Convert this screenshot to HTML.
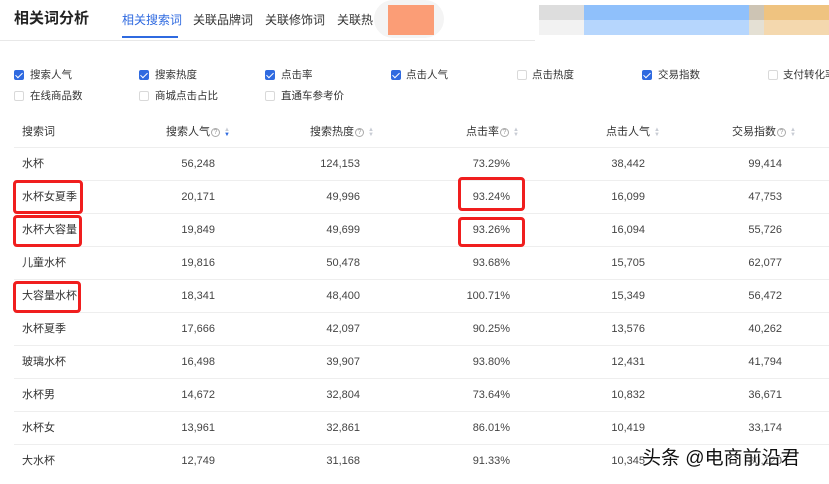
<!DOCTYPE html><html><head><meta charset="utf-8"><style>
*{margin:0;padding:0;box-sizing:border-box}
body{width:829px;height:484px;overflow:hidden;background:#fff;font-family:"Liberation Sans","Noto Sans CJK SC",sans-serif;color:#333;position:relative;font-size:11px;line-height:14px}
.a{position:absolute;white-space:nowrap}
.cb{position:absolute;width:10px;height:10px;border:1px solid #d9d9d9;border-radius:2px;background:#fff}
.cb.on{background:#2f6ae0;border-color:#2f6ae0}
.cb.on:after{content:"";position:absolute;left:2px;top:0px;width:3px;height:6px;border:solid #fff;border-width:0 1.5px 1.5px 0;transform:rotate(45deg)}
.lbl{position:absolute;font-size:10.5px;color:#333;white-space:nowrap}
.hl{position:absolute;left:14px;right:0;height:1px;background:#eee}
.r{position:absolute;text-align:right;color:#444;white-space:nowrap}
.box{position:absolute;border:3px solid #f01e1e;border-radius:4px}
.q{display:inline-block;width:9px;height:9px;border:1px solid #aaa;border-radius:50%;font-size:7px;line-height:7px;text-align:center;color:#999;vertical-align:1px;margin-left:1px}
.s{display:inline-block;width:6px;margin-left:4px;vertical-align:-1px;font-size:6px;line-height:5px;color:#c8ccd4}
</style></head><body>
<div class="a" style="left:14px;top:9px;font-size:15px;line-height:20px;font-weight:bold;color:#222">相关词分析</div>
<div class="a" style="left:122px;top:12px;font-size:12px;line-height:16px;color:#2f6ae0">相关搜索词</div>
<div class="a" style="left:193px;top:12px;font-size:12px;line-height:16px;color:#333">关联品牌词</div>
<div class="a" style="left:265px;top:12px;font-size:12px;line-height:16px;color:#333">关联修饰词</div>
<div class="a" style="left:337px;top:12px;font-size:12px;line-height:16px;color:#333">关联热</div>
<div class="a" style="left:374px;top:0;width:70px;height:38px;background:#f4f4f4;border-radius:19px"></div>
<div class="a" style="left:388px;top:5px;width:46px;height:30px;background:#fb9d76"></div>
<div class="a" style="left:122px;top:36px;width:56px;height:2px;background:#2f6ae0"></div>
<div class="a" style="left:0;top:40px;width:535px;height:1px;background:#e8e8e8"></div>
<div class="a" style="left:539px;top:5px;width:45px;height:30px;background:linear-gradient(#ddd 50%,#f2f2f2 50%)"></div>
<div class="a" style="left:584px;top:5px;width:165px;height:30px;background:linear-gradient(#8fc0fb 50%,#b6d6fd 50%)"></div>
<div class="a" style="left:749px;top:5px;width:15px;height:30px;background:linear-gradient(#cdc4b4 50%,#e4e0d4 50%)"></div>
<div class="a" style="left:764px;top:5px;width:65px;height:30px;background:linear-gradient(#efc380 50%,#f4d8ae 50%)"></div>

<div class="cb on" style="left:14px;top:70px"></div><div class="lbl" style="left:30px;top:68px">搜索人气</div>
<div class="cb on" style="left:139px;top:70px"></div><div class="lbl" style="left:155px;top:68px">搜索热度</div>
<div class="cb on" style="left:265px;top:70px"></div><div class="lbl" style="left:281px;top:68px">点击率</div>
<div class="cb on" style="left:391px;top:70px"></div><div class="lbl" style="left:406px;top:68px">点击人气</div>
<div class="cb" style="left:517px;top:70px"></div><div class="lbl" style="left:532px;top:68px">点击热度</div>
<div class="cb on" style="left:642px;top:70px"></div><div class="lbl" style="left:658px;top:68px">交易指数</div>
<div class="cb" style="left:768px;top:70px"></div><div class="lbl" style="left:783px;top:68px">支付转化率</div>
<div class="cb" style="left:14px;top:91px"></div><div class="lbl" style="left:30px;top:89px">在线商品数</div>
<div class="cb" style="left:139px;top:91px"></div><div class="lbl" style="left:155px;top:89px">商城点击占比</div>
<div class="cb" style="left:265px;top:91px"></div><div class="lbl" style="left:281px;top:89px">直通车参考价</div>

<div class="a" style="left:22px;top:125px">搜索词</div>
<div class="a" style="left:166px;top:125px">搜索人气<span class="q">?</span><span class="s">▲<br><span style="color:#2f6ae0">▼</span></span></div>
<div class="a" style="left:310px;top:125px">搜索热度<span class="q">?</span><span class="s">▲<br>▼</span></div>
<div class="a" style="left:466px;top:125px">点击率<span class="q">?</span><span class="s">▲<br>▼</span></div>
<div class="a" style="left:606px;top:125px">点击人气<span class="s">▲<br>▼</span></div>
<div class="a" style="left:732px;top:125px">交易指数<span class="q">?</span><span class="s">▲<br>▼</span></div>
<div class="hl" style="top:147px"></div>

<div id="rows"></div>
<script>
var d=[["水杯","56,248","124,153","73.29%","38,442","99,414"],["水杯女夏季","20,171","49,996","93.24%","16,099","47,753"],["水杯大容量","19,849","49,699","93.26%","16,094","55,726"],["儿童水杯","19,816","50,478","93.68%","15,705","62,077"],["大容量水杯","18,341","48,400","100.71%","15,349","56,472"],["水杯夏季","17,666","42,097","90.25%","13,576","40,262"],["玻璃水杯","16,498","39,907","93.80%","12,431","41,794"],["水杯男","14,672","32,804","73.64%","10,832","36,671"],["水杯女","13,961","32,861","86.01%","10,419","33,174"],["大水杯","12,749","31,168","91.33%","10,345","30,120"]];
var rt=[215,360,510,645,782],h="";
d.forEach(function(r,i){var y=157+i*33;
h+='<div class="a" style="left:22px;top:'+y+'px">'+r[0]+'</div>';
for(var j=1;j<6;j++)h+='<div class="r" style="left:'+(rt[j-1]-80)+'px;width:80px;top:'+y+'px">'+r[j]+'</div>';
if(i<9)h+='<div class="hl" style="top:'+(180+i*33)+'px"></div>';});
document.getElementById("rows").innerHTML=h;
</script>
<div class="box" style="left:13px;top:180px;width:70px;height:34px"></div>
<div class="box" style="left:13px;top:215px;width:69px;height:32px"></div>
<div class="box" style="left:13px;top:281px;width:68px;height:32px"></div>
<div class="box" style="left:458px;top:177px;width:67px;height:34px"></div>
<div class="box" style="left:458px;top:217px;width:67px;height:30px"></div>
<div class="a" style="left:642px;top:446px;font-size:19px;line-height:26px;color:#111;text-shadow:0 0 2px #fff,0 0 2px #fff">头条 @电商前沿君</div>
</body></html>
